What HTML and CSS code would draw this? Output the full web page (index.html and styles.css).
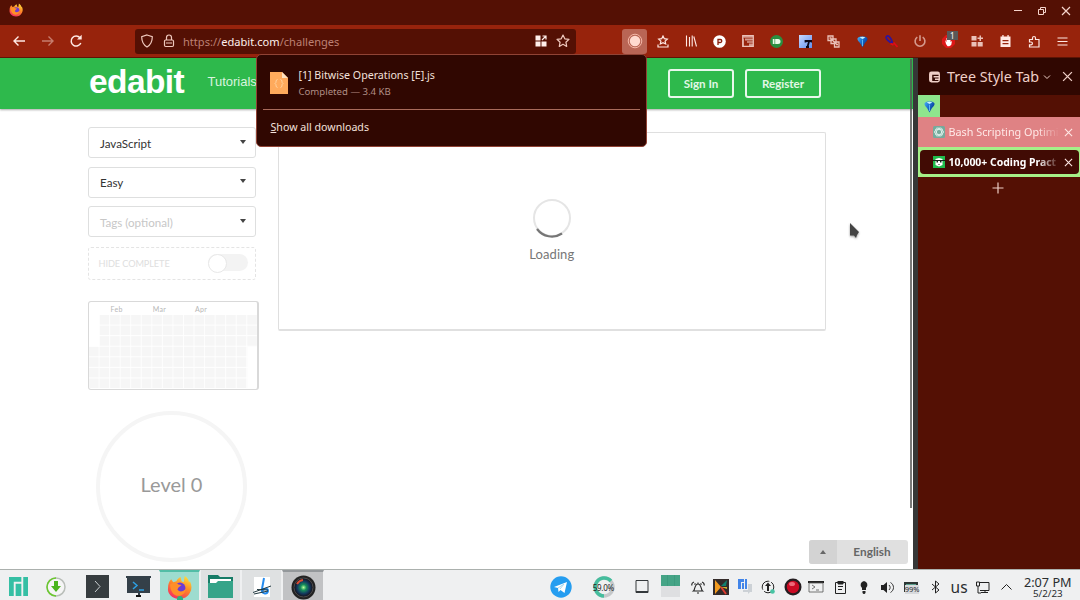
FILE: index.html
```html
<!DOCTYPE html>
<html lang="en">
<head>
<meta charset="utf-8">
<title>edabit challenges</title>
<link rel="stylesheet" href="styles.css">
</head>
<body>
<svg width="0" height="0" class="defs">
  <defs>
    <linearGradient id="fxg" x1="0.8" y1="0" x2="0.3" y2="1"><stop offset="0" stop-color="#ffe23c"/><stop offset=".45" stop-color="#ff8a26"/><stop offset="1" stop-color="#f52c62"/></linearGradient>
    <linearGradient id="blu" x1="0" y1="0" x2="1" y2=".6"><stop offset="0" stop-color="#4fb4f5"/><stop offset=".5" stop-color="#1a6fd0"/><stop offset="1" stop-color="#07348e"/></linearGradient>
    <linearGradient id="sky" x1="0" y1="0" x2="1" y2="1"><stop offset="0" stop-color="#c9d9ff"/><stop offset="1" stop-color="#5f8fee"/></linearGradient>
    <symbol id="firefox" viewBox="0 0 24 24">
      <path fill="url(#fxg)" d="M4 4l2 3 3-1c1-2 2-3 4-4l1 4 2 1 1-6c3 2 4 4 4 6l1-1c2 4 2 8 0 11-2 4-6 6-10 6C5 23 0 18 1 12c0-3 1-6 3-8z"/>
      <circle cx="12.500" cy="12.500" r="5.200" fill="#6d3bd4"/>
      <path fill="#ff8f28" d="M3 9c3-2 6-2 8 0l3 .5-3 2.500-1 2c2 3 6 2 8-1 0 4-3 7-7 7-5 0-8-5-8-11z"/>
    </symbol>
    <symbol id="gem" viewBox="0 0 14 14"><path d="M1.500 4C2 2 4 1.500 7 1.500s5 .5 5.500 2.500c0 2-2 3.500-3 5L7 13.500 4.500 9c-1-1.500-3-3-3-5z" fill="url(#blu)"/><path d="M4 2.500Q7 1 10 2.500 8.500 4 7 4.300 5.500 4 4 2.500z" fill="#c7f2ff"/><path d="M7 5v7" stroke="#5fbdf7"/></symbol>
    <symbol id="tree" viewBox="0 0 12 12"><path fill="none" stroke="currentColor" stroke-width="1.200" d="M.7.700h10.600v10.600H.7z"/><path fill="currentColor" d="M1 1h10v1.800H1zM3 3.600h8v1.800H3zM5 6.200h6v1.600H5zM7 8.600h4V11H7zM1 3.500h1V11H1z" opacity=".75"/></symbol>
    <symbol id="panel" viewBox="0 0 12 12"><rect x=".8" y=".8" width="10.400" height="10.400" rx="1.800" fill="none" stroke="currentColor" stroke-width="1.500"/><path d="M1 1h10v2.500H1zM1 3h2.500v8H1zM5 5h6v1.500H5zM6.500 7.700H11v1.500H6.500z" fill="currentColor"/></symbol>
    <symbol id="cross" viewBox="0 0 10 10"><path d="M1 1l8 8M9 1L1 9" fill="none" stroke="currentColor" stroke-width="1.200"/></symbol>
  </defs>
</svg>
<div class="desktop">
  <header class="titlebar">
    <svg class="brand" width="14" height="14"><use href="#firefox"/></svg>
    <div class="window-buttons">
      <svg width="10" height="10"><path d="M1 4.500h8" stroke="currentColor"/></svg>
      <svg width="10" height="10" fill="none" stroke="currentColor"><path d="M1.500 3.500h5v5h-5zM3.500 3.500v-2h5v5h-2"/></svg>
      <svg width="10" height="10"><use href="#cross"/></svg>
    </div>
  </header>

  <nav class="toolbar">
    <div class="nav-buttons">
      <svg width="14" height="14" fill="none" stroke="currentColor" stroke-width="1.400"><path d="M13 7H2M6.500 2.500L2 7l4.500 4.500"/></svg>
      <svg class="disabled" width="14" height="14" fill="none" stroke="currentColor" stroke-width="1.400"><path d="M1 7h11M7.500 2.500L12 7l-4.500 4.500"/></svg>
      <svg width="14" height="14" fill="none" stroke="currentColor" stroke-width="1.500"><path d="M11.800 9A5 5 0 1 1 11 3.800"/><path d="M8 5.500h4.700V.8z" fill="currentColor" stroke="none"/></svg>
    </div>
    <div class="urlbar">
      <svg width="14" height="14" fill="none" stroke="currentColor" stroke-width="1.200"><path d="M7 1l5.300 1.800c0 5-1.500 8-5.300 10.200C3.200 10.800 1.700 7.800 1.700 2.800z"/></svg>
      <svg width="12" height="14" fill="none" stroke="currentColor" stroke-width="1.200"><rect x="1.500" y="6" width="9" height="6.500" rx="1.200"/><path d="M3.500 6V3.500a2.500 2.500 0 0 1 5 0V6M3 9h6"/></svg>
      <div class="url">https://<b>edabit.com</b>/challenges</div>
      <svg class="apps" width="12" height="12"><path d="M.5.500h5v5h-5zM.5 6.500h5v5h-5zM6.500 6.500h5v5h-5z" fill="currentColor"/><path d="M7.500 1h3.500v3.500M11 1L7 5" fill="none" stroke="currentColor" stroke-width="1.200"/></svg>
      <svg width="14" height="14" fill="none" stroke="currentColor" stroke-width="1.200" stroke-linejoin="round"><path d="M7 1l1.800 3.800 4.200.5-3.100 2.900.8 4.200L7 10.300l-3.700 2.100.8-4.200L1 5.300l4.200-.5z"/></svg>
    </div>
    <div class="extensions">
      <span class="pressed"><svg width="16" height="16"><circle cx="8" cy="8" r="6.800" fill="none" stroke="#f5b7a7"/><circle cx="8" cy="8" r="5.200" fill="#ffd9cf"/></svg></span>
      <span><svg width="12" height="13" fill="none" stroke="currentColor" stroke-width="1.200"><path d="M6 1l1.300 2.700 3 .4-2.200 2 .6 2.900L6 7.600 3.300 9l.6-2.900-2.200-2 3-.4zM1 9.500V12h10V9.500"/></svg></span>
      <span><svg width="12" height="12" fill="none" stroke="currentColor" stroke-width="1.100"><path d="M1.500.5v11M4.500 2v9.500M7.200.5v11M8.800 1.500l2.700 10"/></svg></span>
      <span><svg width="13" height="13"><circle cx="6.500" cy="6.500" r="6.300" fill="#fff"/><path d="M5 10V4.500h2.300a1.500 1.500 0 0 1 0 3H5.200" fill="none" stroke="#8a1e0b" stroke-width="1.300"/></svg></span>
      <span><svg class="soft" width="12" height="12"><use href="#tree"/></svg></span>
      <span><svg width="13" height="13"><circle cx="6.500" cy="6.500" r="6.500" fill="#298f40"/><path d="M2.800 4h1.700v5H2.800zM5.200 4H8a2.500 2.500 0 0 1 0 5H5.200z" fill="#e9fbe7"/></svg></span>
      <span><svg width="13" height="13"><path d="M0 0h13v13H0z" fill="url(#sky)"/><path d="M6.500 7.500V6h6v1.500M10 6.500L8.500 12M7 12h3" fill="none" stroke="#0b0818" stroke-width="1.800"/></svg></span>
      <span><svg class="soft" width="13" height="13" fill="none" stroke="currentColor" stroke-width="1.300"><path d="M1 1h5v4.500H1zM4 4h5v4.500H4zM7.500 7h4.500v5H7.500z"/><path d="M2.500 3h2M6 6.500h1.500M9 9.500h2"/></svg></span>
      <span><svg width="13" height="13"><use href="#gem"/></svg></span>
      <span><svg width="13" height="13" fill="none" stroke-width="1.700"><path d="M7.500 8C4 7.500 0 3 1.500 1.500S6 2 7.500 8" stroke="#2d149f"/><path d="M5.500 8.500l3 1.500M8.500 7.500l4 4.500" stroke="#e20a17"/></svg></span>
      <span><svg class="dim" width="12" height="12" fill="none" stroke="currentColor" stroke-width="1.600"><path d="M3.300 2.200a4.900 4.900 0 1 0 5.400 0M6 .3V6"/></svg></span>
      <span class="blocker"><svg width="13" height="13"><path d="M4 0h5l4 4v5l-4 4H4L0 9V4z" fill="#dd1717"/><path d="M3 5l1.500 2V3h1V2h1v1h1v1h1v3l1.500-1-.8 4-2 1.200H5.500L4 9z" fill="#fff"/></svg><i>1</i></span>
      <span><svg class="soft" width="12" height="12" fill="currentColor"><path d="M.5 1h5v4.500h-5zM.5 7h5v4.500h-5zM6.700 7h5v4.500h-5zM8.500.5H10v2h2V4h-2v2H8.500V4h-2V2.500h2z"/></svg></span>
      <span><svg width="11" height="12"><path d="M.5 1.500h1.800V0h1.300v1.500h3.800V0h1.300v1.500h1.800V12H.5zM2.500 5v1.200h6V5zM2.500 8v1.200h6V8z" fill="currentColor" fill-rule="evenodd"/></svg></span>
      <span><svg width="12" height="13" fill="none" stroke="currentColor" stroke-width="1.200"><path d="M1.500 4.500h3V3a1.500 1.500 0 0 1 3 0v1.500H11V12H1.500V9.800H3a1.400 1.400 0 0 0 0-2.800H1.500z"/></svg></span>
      <span><svg width="11" height="11"><path d="M.5 2h10M.5 5.500h10M.5 9h10" stroke="currentColor" stroke-width="1.100"/></svg></span>
    </div>
  </nav>

  <main class="workspace">
    <section class="page">
      <header class="site-header">
        <div class="logo">edabit</div>
        <a class="tutorials">Tutorials</a>
        <div class="auth"><a class="signin">Sign In</a><a class="register">Register</a></div>
      </header>
      <div class="content">
        <aside class="filters">
          <div class="select">JavaScript<i class="caret"></i></div>
          <div class="select">Easy<i class="caret"></i></div>
          <div class="select placeholder">Tags (optional)<i class="caret"></i></div>
          <div class="hide-complete">HIDE COMPLETE<div class="toggle"></div></div>
          <div class="activity">
            <div class="months"><span>Feb</span><span>Mar</span><span>Apr</span></div>
            <svg width="169" height="74">
              <defs><pattern id="day" width="10.550" height="10.570" patternUnits="userSpaceOnUse"><rect width="9.700" height="9.700" fill="#f6f6f6"/></pattern></defs>
              <path fill="url(#day)" d="M10.550 0H168.500V31.700H158.250V74H0V31.700H10.550z"/>
            </svg>
          </div>
          <div class="level">Level 0</div>
        </aside>
        <div class="results">
          <svg width="40" height="40" fill="none"><circle cx="20" cy="20" r="18" stroke="#e5e5e5" stroke-width="2"/><path d="M5 31A18.500 18.500 0 0 0 30 35.500" stroke="#767676" stroke-width="2.200"/></svg>
          <p>Loading</p>
        </div>
      </div>
      <div class="language"><div class="up"><i></i></div><div class="lang-name">English</div></div>
      <div class="scroll-thumb"></div>
      <svg class="pointer" width="12" height="18"><path d="M1 1v12.500h4L7 16l1-3 2-3z" fill="#444"/></svg>
    </section>
    <div class="splitter"></div>
    <aside class="sidebar">
      <header class="sidebar-title">
        <svg width="11" height="12"><use href="#panel"/></svg>
        <span>Tree Style Tab</span>
        <svg width="8" height="8" fill="none" stroke="currentColor"><path d="M1 2.500l3 3 3-3"/></svg>
        <svg class="close-side" width="11" height="11"><use href="#cross"/></svg>
      </header>
      <div class="pinned"><svg width="13" height="13"><use href="#gem"/></svg></div>
      <div class="tab unread">
        <svg width="12" height="12"><rect width="12" height="12" rx="1.500" fill="#75aa9c"/><g fill="none" stroke="#e3f5ef" stroke-width=".8"><ellipse cx="6" cy="6" rx="4.500" ry="2.500"/><ellipse cx="6" cy="6" rx="4.500" ry="2.500" transform="rotate(60 6 6)"/><ellipse cx="6" cy="6" rx="4.500" ry="2.500" transform="rotate(120 6 6)"/></g></svg>
        <span class="tab-label">Bash Scripting Optimi</span><svg class="close" width="9" height="9"><use href="#cross"/></svg>
      </div>
      <div class="tab active">
        <svg width="12" height="12"><path d="M0 0h12v12H0z" fill="#20bb4c"/><path d="M2.500 3L6 2l3.500 1v6L6 10.500 2.500 9z" fill="#fff"/><path d="M0 4.500h12" stroke="#14251a"/><path d="M3.500 5h1.500v1.500H3.500zM7 5h1.500v1.500H7zM5 8.500h2v.5H5z" fill="#14251a"/></svg>
        <span class="tab-label">10,000+ Coding Pract</span><svg class="close" width="9" height="9"><use href="#cross"/></svg>
      </div>
      <div class="new-tab"><svg width="12" height="12"><path d="M6 .5v11M.5 6h11" stroke="currentColor" stroke-width="1.200"/></svg></div>
    </aside>
  </main>

  <section class="downloads">
    <div class="file">
      <svg width="18" height="22"><path d="M0 0h12l6 6v16H0z" fill="#ffaa5c"/><path d="M12 0l6 6h-6z" fill="#ffe2bf"/><path d="M7.500 7.500C5 8 7 10.500 5 11.500c2 1 0 3.500 2.500 4M10.500 7.500c2.500.5.500 3 2.500 4-2 1 0 3.500-2.500 4" fill="none" stroke="#ffd5a3"/></svg>
      <div><div class="filename">[1] Bitwise Operations [E].js</div><div class="status">Completed — 3.4 KB</div></div>
    </div>
    <div class="show-all"><u>S</u>how all downloads</div>
  </section>

  <footer class="taskbar">
    <div class="start"><svg width="19" height="19" viewBox="0 0 20 20" fill="#35bfa4"><path d="M0 0h13v5H5v15H0zM7 7h6v13H7zM15 0h5v20h-5z"/></svg></div>
    <div class="updater"><svg width="20" height="20"><circle cx="10" cy="10" r="9" fill="#f5f5f5" stroke="#b9beb9" stroke-width="1.500"/><path d="M10 1A9 9 0 0 0 10 19" fill="none" stroke="#6ac92e" stroke-width="1.500"/><path d="M8 4h4v5h3l-5 6-5-6h3z" fill="#4bb51d"/></svg></div>
    <div class="task"><svg width="23" height="23"><path d="M0 0h23v23H0z" fill="#363c3f"/><path d="M9 6l5 5.500L9 17" fill="none" stroke="#c9ced0"/></svg></div>
    <div class="task"><svg width="25" height="21"><path d="M0 0h25v2H0zM1 2h23v15H1zM12 17h2v3h-2z" fill="#344049"/><path d="M10 19h5v2h-5z" fill="#111"/><path d="M7 6l4 3.500L7 13M13 14h5" fill="none" stroke="#2da0e3" stroke-width="1.500"/></svg></div>
    <div class="task current"><svg width="25" height="25"><use href="#firefox"/></svg><i class="plus"></i></div>
    <div class="task open"><svg width="25" height="23"><path d="M0 0h10l2 2h13v21H0z" fill="#177c67"/><path d="M2 4h21v5H2z" fill="#fff"/><path d="M0 8h8l2-2h15v17H0z" fill="#35a489"/></svg></div>
    <div class="task open"><svg width="20" height="20"><path d="M2 0h16v20H2z" fill="#fff"/><path d="M12 1l-2 11c-1 5 5 6 6 2 0-3-4-3-6 0" fill="none" stroke="#258cf0" stroke-width="2"/><path d="M1 15.500L19 9M2 17l14-3M5 12.500l11 .5" stroke="#213940"/></svg></div>
    <div class="task minimized"><svg width="25" height="25"><defs><radialGradient id="lens"><stop stop-color="#b6ff9a"/><stop offset=".3" stop-color="#16905a"/><stop offset=".65" stop-color="#123b60"/><stop offset="1" stop-color="#170d13"/></radialGradient></defs><circle cx="12.500" cy="12.500" r="12" fill="#222"/><circle cx="12.500" cy="12.500" r="9.500" fill="url(#lens)" stroke="#4b4b4b"/><path d="M6 9a8 8 0 0 1 6-4" stroke="#d94c32" stroke-width="2" fill="none"/></svg></div>
    <div class="task-space"></div>
    <div class="telegram"><svg width="22" height="22"><circle cx="11" cy="11" r="10.700" fill="#259df0"/><path d="M4 11l13-5-2.500 11-4-3-2 2-.5-4z" fill="#fff"/><path d="M8 12l6-4-4 5" stroke="#a8d8ef" fill="none"/></svg></div>
    <div class="usage"><svg width="22" height="22" fill="none" stroke-width="3.500"><circle cx="11" cy="11" r="9" stroke="#c5c8ca"/><path d="M11 20A9 9 0 1 1 18 5" stroke="#45bd9d"/></svg><b>59.0%</b></div>
    <div class="desktop-toggle"><svg width="14" height="14" fill="none" stroke="#34383b"><path d="M1 .5h12v12H1zM1 11.500h12"/></svg></div>
    <div class="pager"><div></div><div></div></div>
    <div class="tray">
      <span><svg width="14" height="14" fill="none" stroke="#222" stroke-width="1.100"><path d="M2.500 11c1.500-1 1-7 4.500-7s3 6 4.500 7zM6 13h2M7 4V2.500M1 5.500C.5 4 1.500 2.500 3 2M3.500 4.500l1-1M13 5.500c.5-1.500-.5-3-2-3.500M10.500 4.500l-1-1"/></svg></span>
      <span><svg width="16" height="16"><path d="M0 0h16v16H0z" fill="#342b2a"/><path d="M2 1l6 7-6 7z" fill="#f39b1f"/><path d="M14 1L8 7h5z" fill="#11806e"/><path d="M8 8l5 7" stroke="#df3b2f" stroke-width="2"/><path d="M8 8h6v2z" fill="#d2b22c"/></svg></span>
      <span><svg width="16" height="16"><path d="M1 0h6v3H4v7H1zM5 4h2v6H5zM8 0h2v10H8z" fill="#4285e9"/><path d="M11 5h4v8h-2l-2 2v-2H6v-2h5z" fill="#ccd1d6"/></svg></span>
      <span><svg width="15" height="15"><circle cx="7" cy="7" r="5.800" fill="none" stroke="#222" stroke-dasharray="13 2"/><path d="M7 2.500l3 3.500H8v5H6V6H4z" fill="#222"/><circle cx="11.500" cy="11.500" r="2.300" fill="#48c4a4"/></svg></span>
      <span><svg width="18" height="18"><circle cx="9" cy="9" r="8.500" fill="#241d20"/><circle cx="9" cy="9" r="6.200" fill="#cb0b24"/><ellipse cx="8" cy="6" rx="3" ry="2" fill="#ee6979"/></svg></span>
      <span><svg width="16" height="12"><path d="M0 0h16v2H0z" fill="#222"/><path d="M1 2h14v9H1zM4 4l3 2-3 2M8 9h3" fill="none" stroke="#555" stroke-width=".8"/></svg></span>
      <span><svg width="11" height="13" fill="none" stroke="#222"><path d="M.5 1.500h10v11H.5zM3 5.500h5M3 8.500h4"/><path d="M3 0h5v3H3z" fill="#222"/></svg></span>
      <span><svg width="8" height="13" fill="#222"><path d="M4 0a4 4 0 0 1 2 7v2H2V7a4 4 0 0 1 2-7zM2.500 10h3v2l-1 1h-1l-1-1z"/></svg></span>
      <span><svg width="13" height="13"><path d="M0 4h2.500L6 1v11L2.500 9H0z" fill="#222"/><path d="M8 4c1.500 1.500 1.500 3.500 0 5M9.500 1.500c4 2.500 4 7.500 0 10" fill="none" stroke="#333"/></svg></span>
      <span class="battery"><svg width="15" height="12"><path d="M0 1h14v10H0z" fill="#2d3735"/><path d="M2 3h10v2H2z" fill="#59a18e"/></svg><b>99%</b></span>
      <span><svg width="9" height="14" fill="none" stroke="#222"><path d="M1 4l7 6-3.500 3V1L8 4l-7 6"/></svg></span>
      <span class="layout">us</span>
      <span><svg width="14" height="13" fill="none" stroke="#222"><path d="M4 1.500h9v8H4M9 9.500v2M5 11.500h7M.5 1h3v4h-3zM2 5v7h3"/></svg></span>
      <span><svg width="11" height="8" fill="none" stroke="#222"><path d="M.5 6.500l5-5 5 5"/></svg></span>
    </div>
    <div class="clock"><div>2:07 PM</div><small>5/2/23</small></div>
  </footer>
</div>
</body>
</html>
```

FILE: styles.css
```css
* { box-sizing: border-box; }
body { margin: 0; overflow: hidden; font-family: "Noto Sans", sans-serif; }
svg { display: block; flex: none; }
i { font-style: normal; }
.defs { position: absolute; }
.desktop { position: relative; width: 1080px; height: 600px; display: flex; flex-direction: column; background: #fff; }

.titlebar { height: 25px; flex: none; background: #541004; color: #f5d4cc; display: flex; justify-content: space-between; padding: 3px 9px 0; }
.window-buttons { display: flex; gap: 14px; padding-top: 3px; }

.toolbar { height: 33px; flex: none; background: #97230c; border-bottom: 1px solid #5d1405; color: #ffe9e4; display: flex; align-items: center; }
.nav-buttons { width: 134.500px; padding-left: 12px; display: flex; gap: 14.500px; }
.disabled { opacity: .45; }
.urlbar { width: 441.500px; height: 25px; border-radius: 3px; background: #541004; color: #efc8bd; padding: 0 6px 0 5.500px; display: flex; align-items: center; }
.urlbar svg:nth-child(2) { margin-left: 9px; }
.url { flex: 1; margin-left: 8px; font-size: 11.100px; color: #bd8073; white-space: nowrap; }
.url b { font-weight: 400; color: #fff0ec; }
.apps { color: #ffeeea; }
.urlbar svg:last-child { margin-left: 9px; }
.extensions { margin-left: 44px; display: flex; }
.extensions span { width: 28.540px; height: 25px; display: flex; align-items: center; justify-content: center; }
.extensions .pressed { background: #b96555; border-radius: 3px; width: 25px; margin: 0 1.500px 0 2px; }
.soft { opacity: .8; }
.dim { opacity: .6; }
.blocker { position: relative; }
.blocker i { position: absolute; left: 13px; top: 2px; width: 11px; height: 9px; background: #595959; color: #fff; font-size: 8px; line-height: 9px; text-align: center; }

.workspace { height: 511px; flex: none; display: flex; }
.page { position: relative; width: 913px; overflow: hidden; background: #fff; font-family: Lato, sans-serif; }
.site-header { height: 51px; background: #2eb94c; display: flex; padding-left: 89px; color: #fff; box-shadow: 0 1px 2px #aaa; }
.logo { width: 118.500px; font: bold 33.500px/47px "Liberation Sans", sans-serif; letter-spacing: -.6px; }
.tutorials { width: 460.500px; padding-top: 16px; font: 13px/16px "Liberation Sans", sans-serif; color: #d9f4df; }
.auth { display: flex; gap: 11px; padding-top: 11px; }
.auth a { height: 29px; border: 2px solid #e9f8ec; border-radius: 3px; font-size: 11.600px; font-weight: 700; line-height: 26px; text-align: center; color: #e2f7e6; }
.signin { width: 66px; }
.register { width: 76px; }
.content { display: flex; padding: 18px 0 0 88px; gap: 21.500px; }
.filters { width: 168px; flex: none; display: flex; flex-direction: column; }
.select { height: 31px; margin-bottom: 8.700px; border: 1px solid #dedfdf; border-radius: 3px; padding: 1px 9px 0 11px; display: flex; align-items: center; justify-content: space-between; font-size: 11.600px; color: #333; flex: none; }
.placeholder { color: #c7c7c7; }
.caret { border: 3.500px solid transparent; border-top: 4px solid #444; border-bottom: 0; margin-top: -3px; }
.hide-complete { height: 33px; margin-top: 1px; border: 1px dashed #e4e4e4; border-radius: 3px; padding: 0 7px 0 9.500px; display: flex; align-items: center; justify-content: space-between; font-size: 9.200px; letter-spacing: -.1px; color: #dedede; line-height: 35px; flex: none; }
.toggle { width: 40px; height: 17px; border-radius: 9px; background: #f3f3f3; margin-bottom: 3px; }
.toggle::before { content: ""; display: block; width: 17px; height: 17px; border-radius: 50%; border: 1px solid #e8e8e8; background: #fff; }
.activity { width: 171px; height: 89px; margin-top: 21px; border: 1px solid #d9d9d9; border-right-width: 2px; border-radius: 3px; overflow: hidden; flex: none; }
.months { height: 13px; padding-left: 21.500px; display: flex; font-size: 7px; line-height: 15px; letter-spacing: .3px; color: #b7b7b7; }
.months span { width: 42.300px; }
.level { width: 151px; height: 151px; margin: 20.500px 0 0 8px; border: 4px solid #f5f5f5; border-radius: 50%; text-align: center; line-height: 139px; font-size: 20px; color: #999; flex: none; }
.results { width: 548.500px; height: 199px; margin-top: 5px; border: 1px solid #dfdfdf; border-bottom: 2px solid #e0e0e0; border-radius: 2px; display: flex; flex-direction: column; align-items: center; padding-top: 65px; color: #777; }
.results p { margin: 7px 0 0; font-size: 13px; line-height: 18px; letter-spacing: .1px; }
.language { position: absolute; left: 809px; bottom: 5px; width: 99px; height: 24px; display: flex; border-radius: 3px; overflow: hidden; background: #e0e0e0; color: #666; font-size: 11.800px; font-weight: 700; line-height: 24px; }
.up { width: 28px; background: #d3d3d3; display: flex; align-items: center; justify-content: center; }
.up i { border: 3.500px solid transparent; border-bottom: 4px solid #666; border-top: 0; }
.lang-name { flex: 1; text-align: center; padding-right: 1px; }
.scroll-thumb { position: absolute; right: 1px; top: 1px; width: 2px; height: 449px; background: rgb(88 88 88 / 80%); }
.pointer { position: absolute; left: 849px; top: 164px; filter: drop-shadow(0 1px 1px #999); }
.splitter { width: 5px; background: #363737; }

.sidebar { flex: 1; min-width: 0; background: #541004; color: #efcfc7; }
.sidebar-title { height: 37px; background: #300701; display: flex; align-items: center; padding: 0 7px 0 11px; font-size: 14.300px; }
.sidebar-title span { margin: 0 4px 0 7px; white-space: nowrap; line-height: 18px; }
.close-side { margin-left: auto; }
.pinned { width: 22px; height: 22px; background: #8ee58d; padding: 5px; }
.tab { height: 30px; display: flex; align-items: center; padding: 0 7px 0 15px; font-size: 10.800px; white-space: nowrap; }
.tab-label { width: 111px; margin-left: 3.500px; padding-bottom: 1px; mask-image: linear-gradient(90deg, #000 80%, transparent); }
.close { margin-left: auto; color: #ffe8e5; }
.unread { background: #df8284; color: #ffe9e7; }
.active { position: relative; z-index: 0; background: #a5f088; color: #fff; font-weight: 700; font-size: 10.450px; }
.active::before { content: ""; position: absolute; z-index: -1; inset: 3px 1px 3px 2px; border-radius: 4px; background: #410b04; }
.new-tab { height: 22px; display: flex; justify-content: center; align-items: center; padding-right: 2px; }

.downloads { position: absolute; left: 256px; top: 54px; width: 391px; height: 93px; border: 1px solid #914335; border-radius: 5px; background: #300701; color: #f3e1dc; padding: 0 6px; }
.file { height: 55px; border-bottom: 1px solid #a96b5b; display: flex; gap: 11px; padding: 17px 0 0 6.500px; }
.file > div { margin-top: -5px; }
.filename { font-size: 10.650px; line-height: 17px; }
.status { font-size: 9.600px; line-height: 16px; color: #b08e86; }
.show-all { padding: 9px 0 0 7.500px; font-size: 10.650px; line-height: 17px; }

.taskbar { height: 31px; flex: none; border-top: 1px solid #abb0ad; background: #eff0f1; color: #292d2f; display: flex; }
.taskbar > div { flex: none; }
.start, .updater, .task, .telegram, .usage, .desktop-toggle { display: flex; align-items: center; justify-content: center; padding-top: 3px; }
.start { width: 36px; }
.updater { width: 40.500px; padding-top: 4px; }
.task { position: relative; width: 41.200px; border-left: 1px solid #eff0f1; border-right: 1px solid #eff0f1; }
.current { background: #9ddccf; border-top: 2px solid #52bda6; }
.plus { position: absolute; left: 17px; bottom: -2px; width: 6px; height: 6px; border-radius: 50%; background: #2db381; }
.open { background: #dfe1e2; }
.minimized { background: #c1c2c4; border-top: 2px solid #94989b; }
.taskbar > .task-space { flex: 1; }
.telegram { width: 38px; }
.usage { position: relative; width: 48px; padding-top: 4px; }
.usage b { position: absolute; left: 13px; top: 11px; font-size: 8px; line-height: 13px; font-weight: 400; letter-spacing: -.3px; color: #222; }
.desktop-toggle { width: 28px; padding-top: 4px; }
.pager { width: 30px; padding: 5px 5.500px; }
.pager div { height: 11px; background: repeating-linear-gradient(90deg, #45a486 0 6px, #3d9b7e 6px 7px); }
.pager div + div { background: #dedfe1; }
.tray { display: flex; }
.tray span { position: relative; width: 23.770px; display: flex; align-items: center; justify-content: center; padding-top: 4px; }
.tray .layout { font-size: 15.500px; }
.battery b { position: absolute; left: 5px; top: 15px; background: #d8dadd; font-size: 7.500px; line-height: 9px; font-weight: 400; }
.clock { width: 60.500px; padding: 4px 2px 0 0; text-align: center; font-size: 12.700px; line-height: 16px; margin-right: 1px; white-space: nowrap; }
.clock small { display: block; font-size: 9.800px; line-height: 9px; margin-top: -1px; }
```
